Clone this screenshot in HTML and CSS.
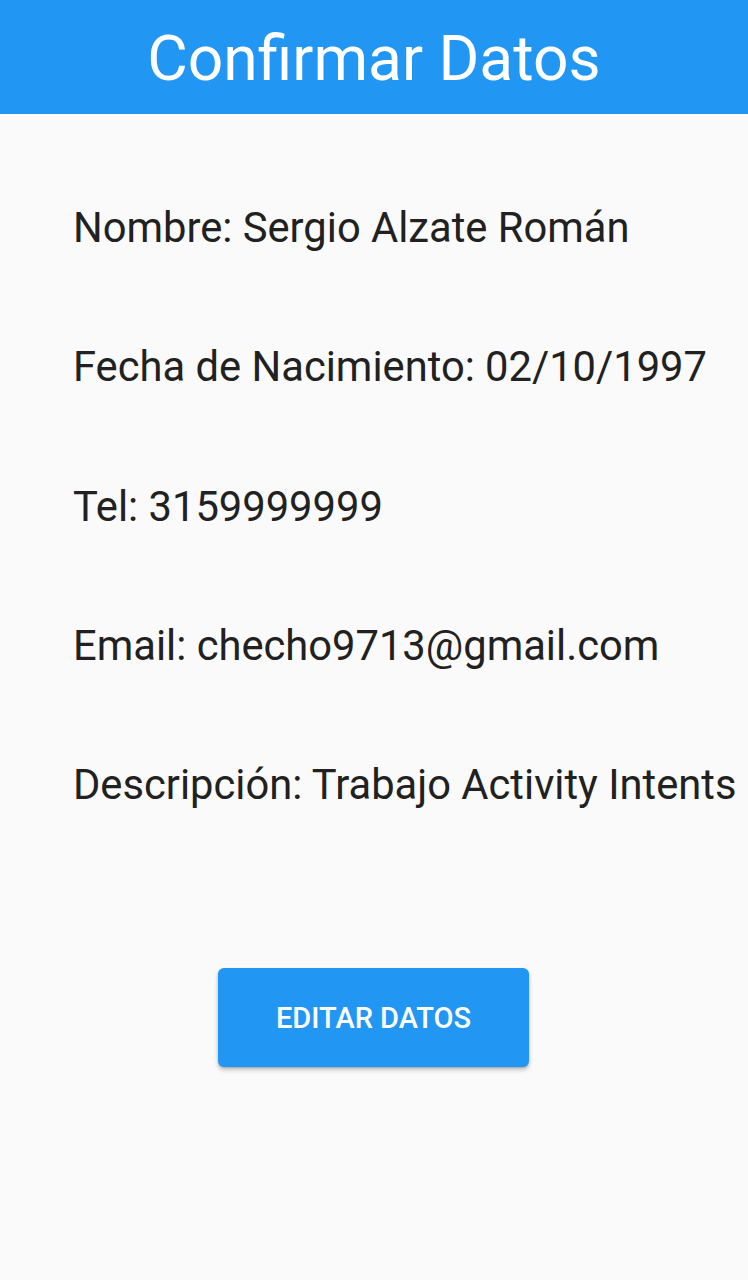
FILE: index.html
```html
<!DOCTYPE html>
<html lang="es">
<head>
<meta charset="utf-8">
<title>Confirmar Datos</title>
<link rel="stylesheet" href="styles.css">
</head>
<body>
<header class="appbar"><h1 class="title">Confirmar Datos</h1></header>
<main class="content">
  <p class="field">Nombre: Sergio Alzate Román</p>
  <p class="field">Fecha de Nacimiento: 02/10/1997</p>
  <p class="field">Tel: 3159999999</p>
  <p class="field">Email: checho9713@gmail.com</p>
  <p class="field">Descripción: Trabajo Activity Intents</p>
  <div class="actions"><button class="btn">EDITAR DATOS</button></div>
</main>
</body>
</html>
```
FILE: styles.css
```css
html, body { margin: 0; padding: 0; }
body {
  background: #fafafa;
  font-family: Roboto, "Noto Sans", sans-serif;
  width: 748px;
  height: 1280px;
  overflow: hidden;
}
.appbar {
  background: #2196f3;
  height: 114px;
  display: flex;
  align-items: center;
  justify-content: center;
}
.title {
  margin: 0;
  padding-top: 4px;
  color: #fff;
  font-weight: 400;
  font-size: 62.3px;
  line-height: 1;
}
.content {
  padding: 90px 0 0 73px;
}
.field {
  margin: 0;
  height: 139.25px;
  font-size: 41.7px;
  line-height: 48px;
  color: #212121;
  white-space: nowrap;
}
.actions {
  display: flex;
  padding-left: 145px;
  padding-top: 68px;
}
.btn {
  width: 311px;
  height: 99px;
  border: 0;
  border-radius: 6px;
  background: #2196f3;
  color: #fff;
  font-family: Roboto, sans-serif;
  font-weight: 500;
  font-size: 29px;
  box-shadow: 0 3px 4px rgba(0,0,0,0.22), 0 1px 2px rgba(0,0,0,0.15);
}
```
